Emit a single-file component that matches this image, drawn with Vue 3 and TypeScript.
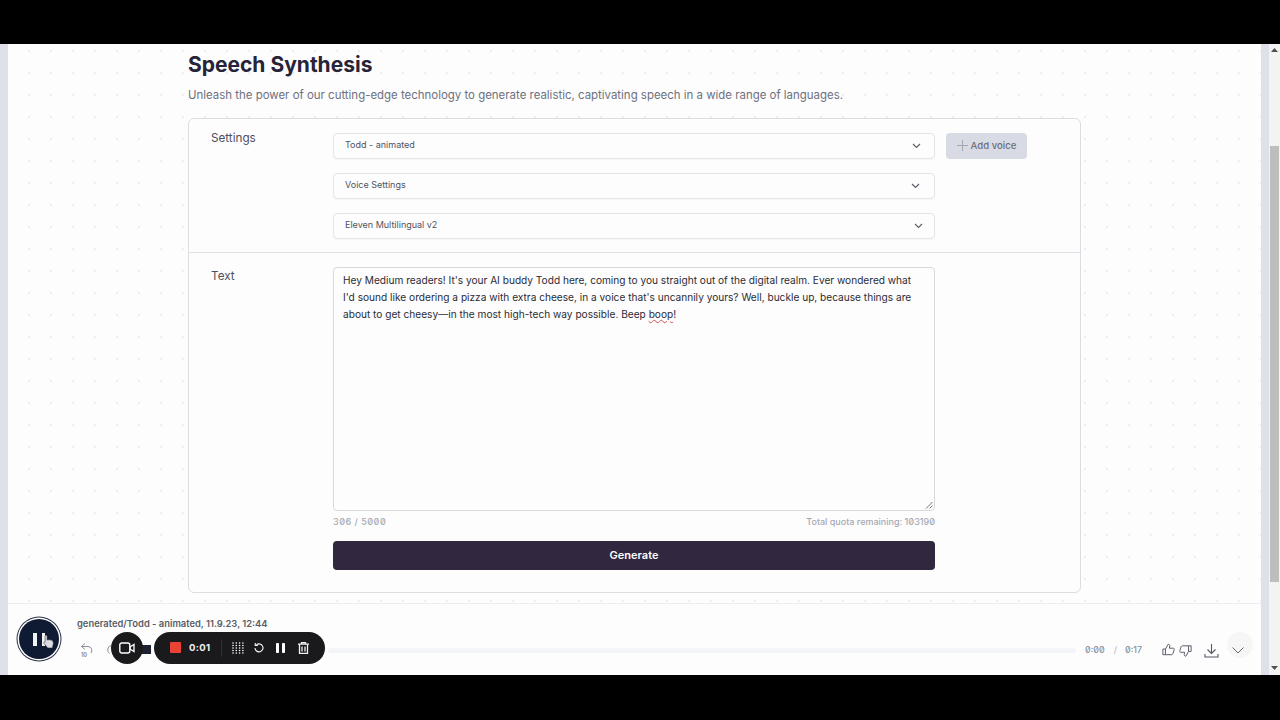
<script setup lang="ts">
const selects = ['Todd - animated', 'Voice Settings', 'Eleven Multilingual v2']
</script>

<template>
  <div class="screen">
    <div class="letterbox-top"></div>
    <div class="stage">
      <div class="side-strip"></div>
      <div class="page">
        <main class="content">
          <h1 class="title">Speech Synthesis</h1>
          <p class="lead">Unleash the power of our cutting-edge technology to generate realistic, captivating speech in a wide range of languages.</p>
          <section class="card">
            <div class="row settings">
              <div class="label">Settings</div>
              <div class="fields">
                <div v-for="s in selects" :key="s" class="select">
                  <span class="select-text">{{ s }}</span>
                  <svg class="chev" width="9" height="6" viewBox="0 0 9 6"><path d="M1 1 4.500 4.500 8 1" fill="none" stroke="#5b5d69" stroke-width="1.100"/></svg>
                </div>
              </div>
              <div class="add-voice">
                <svg width="11" height="11" viewBox="0 0 11 11"><path d="M5.500 0v11M0 5.500h11" stroke="#a3a6b3" stroke-width="1"/></svg>
                <span>Add voice</span>
              </div>
            </div>
            <div class="row text-row">
              <div class="label">Text</div>
              <div class="editor">
                <div class="textarea">
                  Hey Medium readers! It's your AI buddy Todd here, coming to you straight out of the digital realm. Ever wondered what I'd sound like ordering a pizza with extra cheese, in a voice that's uncannily yours? Well, buckle up, because things are about to get cheesy—in the most high-tech way possible. Beep <span class="misspelt">boop</span>!
                  <svg class="grip" width="8" height="8" viewBox="0 0 8 8"><path d="M7.500 1 1 7.500M7.500 4.500 4.500 7.500" stroke="#777" stroke-width="1"/></svg>
                </div>
                <div class="meta"><span class="count">306 / 5000</span><span>Total quota remaining: 103190</span></div>
                <button class="generate">Generate</button>
              </div>
            </div>
          </section>
        </main>
        <footer class="player">
          <div class="play">
            <span class="bar"></span><span class="bar"></span>
          </div>
          <div class="player-title">generated/Todd - animated, 11.9.23, 12:44</div>
          <div class="controls">
            <svg class="back" width="14" height="16" viewBox="0 0 14 16"><path d="M5 1.500 1.500 4.500 5 7.500M1.500 4.500H8a4 4 0 0 1 3 6.500" fill="none" stroke="#8c8f9a" stroke-width="1"/><text x="1" y="15" font-size="5.500" font-family="Inter" font-weight="700" fill="#8c8f9a">10</text></svg>
            <svg class="forward" width="14" height="16" viewBox="0 0 14 16"><path d="M5 2.500a4.500 4.500 0 0 0-1.500 8" fill="none" stroke="#8c8f9a" stroke-width="1"/></svg>
            <div class="track"></div>
            <div class="times"><span>0:00</span><span class="sep">/</span><span>0:17</span></div>
            <div class="actions">
              <svg class="thumb-up" width="13" height="13" viewBox="0 0 15 14"><path d="M1 6.500h3v6.500H1zM4 6.500 7 1c1.500 0 2 1 2 2L8.500 5.500H13c1 0 1.500 1 1 2l-1.500 4.500c-.3.800-1 1-1.500 1H4" fill="none" stroke="#555964" stroke-width="1.100"/></svg>
              <svg class="thumb-down" width="13" height="14" viewBox="0 0 15 14"><path d="M14 7.500h-3V1h3zM11 7.500 8 13c-1.500 0-2-1-2-2l.5-2.500H2c-1 0-1.500-1-1-2L2.500 2C2.800 1.200 3.500 1 4 1h7" fill="none" stroke="#555964" stroke-width="1.100"/></svg>
              <svg class="dl" width="15" height="15" viewBox="0 0 15 15"><path d="M7.500 1v9.500M3.500 6.500l4 4 4-4M1 11v3h13v-3" fill="none" stroke="#555964" stroke-width="1.100"/></svg>
              <div class="collapse"></div>
              <svg class="collapse-chev" width="12" height="7" viewBox="0 0 12 7"><path d="M.5.500 6 6l5.500-5.500" fill="none" stroke="#666a75" stroke-width="1"/></svg>
            </div>
          </div>
          <svg class="cursor" width="12" height="15" viewBox="0 0 14 17"><path d="M3.500 1.200c.8 0 1.300.6 1.300 1.400v4.200c.9-.3 5-.6 6.500 1 1 1.200.9 3.300.3 5.200L11 16H5.500L1 10.500c-.6-.8.500-1.800 1.300-1.200l.1.100V2.600c0-.8.300-1.400 1.100-1.400z" fill="#dcdce2" stroke="#2a2a3a" stroke-width=".6"/></svg>
        </footer>

        <div class="behind"></div>
        <div class="rec-cam">
          <svg width="16" height="12" viewBox="0 0 16 12"><rect x=".8" y="1" width="10" height="10" rx="2" fill="none" stroke="#fff" stroke-width="1.400"/><path d="M11 5l4-2.500v7L11 7z" fill="none" stroke="#fff" stroke-width="1.300"/></svg>
        </div>
        <div class="rec-pill">
          <span class="stop"></span>
          <span class="rec-time">0:01</span>
          <span class="rec-sep"></span>
          <svg class="i-grid" width="12" height="12" viewBox="0 0 12 12" fill="#fff"><circle v-for="p in 20" :key="p" :cx="1 + ((p - 1) % 4) * 3.300" :cy="1 + Math.floor((p - 1) / 4) * 2.500" r=".8"/></svg>
          <svg class="i-redo" width="10" height="11" viewBox="0 0 12 13"><path d="M3 3.200A4.800 4.800 0 1 1 1.200 7" fill="none" stroke="#fff" stroke-width="1.300"/><path d="M1.500 1v3h3" fill="none" stroke="#fff" stroke-width="1.300"/></svg>
          <svg class="i-pause" width="9" height="10" viewBox="0 0 9 10" fill="#fff"><rect x="0" y="0" width="3" height="10" rx=".8"/><rect x="6" y="0" width="3" height="10" rx=".8"/></svg>
          <svg class="i-trash" width="11" height="12" viewBox="0 0 11 12"><path d="M0 2.200h11M3.500 2V.7h4V2M1.500 2.500v9h8v-9M4 4.500v5M7 4.500v5" fill="none" stroke="#f0f0f0" stroke-width="1.300"/></svg>
        </div>
      </div>
      <div class="side-strip right"></div>
      <div class="scrollbar">
        <svg class="up" width="7" height="4" viewBox="0 0 7 4"><path d="M0 4 3.500 0 7 4z" fill="#505050"/></svg>
        <div class="thumb"></div>
        <svg class="dn" width="7" height="4" viewBox="0 0 7 4"><path d="M0 0 3.500 4 7 0z" fill="#505050"/></svg>
      </div>
    </div>
    <div class="letterbox-bottom"></div>
  </div>
</template>

<style>
html, body { margin: 0; background: #000; overflow: hidden; }
</style>

<style scoped>
.screen { width: 1280px; height: 720px; display: flex; flex-direction: column; font-family: Inter, "Noto Sans", sans-serif; background: #000; }
.letterbox-top { height: 44px; flex: none; background: #000; }
.letterbox-bottom { height: 45px; flex: none; background: #000; }
.stage { height: 631px; flex: none; display: flex; }
.side-strip { width: 8px; flex: none; background: #dfe1e8; }
.side-strip.right { background: #dfe1e8; }
.page { width: 1253px; flex: none; position: relative; display: flex; flex-direction: column; background-color: #fdfdfd; }
.content { flex: none; height: 559px; box-sizing: border-box; padding: 0 0 0 180px; background-color: #fdfdfd; background-image: radial-gradient(circle, #eeeef0 0.8px, transparent 1.1px); background-size: 22px 22px; background-position: 10px 18px; }
.title { margin: 8px 0 0; font-size: 21px; line-height: 26px; font-weight: 700; color: #27243a; letter-spacing: 0; }
.lead { margin: 8px 0 0; font-size: 11.450px; line-height: 18px; color: #6e7080; font-weight: 400; }
.card { width: 893px; box-sizing: border-box; height: 475px; margin-top: 14px; border: 1px solid #dcdde2; border-radius: 6px; background: #fdfdfd; display: flex; flex-direction: column; }
.row { display: flex; }
.settings { height: 134px; box-sizing: border-box; border-bottom: 1px solid #dfe0e6; padding-top: 14px; }
.label { width: 122px; flex: none; padding-left: 22px; font-size: 11.700px; line-height: 12px; color: #4d4f5e; }
.settings .label { margin-top: -1px; }
.fields { width: 602px; flex: none; display: flex; flex-direction: column; gap: 14px; }
.select { height: 26px; box-sizing: border-box; border: 1px solid #e5e6ea; border-radius: 4px; background: #fdfdfd; display: flex; align-items: center; justify-content: space-between; padding: 0 14px 0 11px; font-size: 9px; color: #50525f; box-shadow: 0 1px 1px rgba(40,40,60,.04); }
.select-text { margin-top: -3px; }
.chev { margin-top: -1px; }
.select:nth-child(1) .chev { margin-right: -1px; }
.select:nth-child(3) .chev { margin-right: -3px; }
.add-voice { margin-left: 11px; width: 81px; height: 26px; padding-bottom: 1px; box-sizing: border-box; border-radius: 4px; background: #d9dbe4; display: flex; align-items: center; justify-content: center; gap: 3px; font-size: 9.600px; font-weight: 500; color: #6b6e7c; }
.text-row { padding-top: 14px; flex: 1; }
.text-row .label { padding-top: 3px; }
.editor { width: 602px; flex: none; }
.textarea { position: relative; height: 244px; box-sizing: border-box; border: 1px solid #d8d9df; border-radius: 4px; background: #fdfdfd; padding: 4px 18px 4px 9px; font-size: 10.150px; line-height: 17px; color: #2c2c36; }
.grip { position: absolute; right: 1px; bottom: 1px; }
.misspelt { text-decoration: underline wavy #d9534f 1px; text-underline-offset: 1px; }
.meta { display: flex; justify-content: space-between; margin-top: 6px; font-size: 9px; line-height: 10px; color: #a6a8b2; font-weight: 500; font-feature-settings: "zero"; }
.count { letter-spacing: .5px; }
.generate { display: block; margin-top: 14px; width: 602px; height: 29px; padding: 0 0 2px; border: 0; border-radius: 4px; background: #312840; color: #fff; font-family: Inter, sans-serif; font-size: 11px; font-weight: 600; }
.player { position: relative; flex: 1; background: #fdfdfd; border-top: 1px solid #ecedf0; }
.play { position: absolute; left: 11px; top: 15px; width: 40px; height: 40px; border-radius: 50%; background: #0f1a33; box-shadow: 0 0 0 1.500px #fdfdfd, 0 0 0 2.500px #2a3145; display: flex; align-items: center; justify-content: center; gap: 5px; }
.bar { width: 3.500px; height: 13px; background: #f2f2f4; }
.player-title { position: absolute; left: 69px; top: 14px; font-size: 9.400px; line-height: 12px; font-weight: 600; color: #5a5c66; white-space: nowrap; }
.controls { position: absolute; left: 0; right: 0; top: 37px; height: 20px; }
.back { position: absolute; left: 72px; top: 1px; }
.forward { position: absolute; left: 98px; top: 2px; }
.track { position: absolute; left: 320px; width: 748px; top: 7px; height: 5px; border-radius: 3px; background: #f3f5f9; }
.times { position: absolute; left: 1077px; top: 3px; display: flex; font-size: 8.800px; line-height: 12px; color: #8b8e99; font-weight: 500; font-feature-settings: "zero"; }
.sep { margin: 0 8px 0 9px; color: #b8bac2; }
.actions { position: absolute; left: 1152px; top: 0; width: 102px; height: 20px; }
.thumb-up { position: absolute; left: 2px; top: 2px; }
.thumb-down { position: absolute; left: 19px; top: 3px; }
.dl { position: absolute; left: 44px; top: 2px; }
.collapse { position: absolute; left: 67px; top: -9px; width: 26px; height: 26px; border-radius: 50%; background: #f6f6f7; }
.collapse-chev { position: absolute; left: 72px; top: 6px; }
.cursor { position: absolute; left: 35px; top: 30px; }
.rec-cam { position: absolute; left: 103px; top: 588px; width: 32px; height: 32px; border-radius: 50%; background: #1a1a1c; display: flex; align-items: center; justify-content: center; }
.behind { position: absolute; left: 133px; top: 601px; width: 10px; height: 9px; background: #1d2030; }
.rec-pill { position: absolute; left: 146px; top: 588px; width: 171px; height: 32px; border-radius: 16px; background: #1a1a1c; }
.rec-pill > * { position: absolute; }
.stop { left: 16px; top: 10px; width: 11px; height: 11px; background: #ea4335; border-radius: 1px; }
.rec-time { left: 35px; top: 10px; font-size: 9.500px; line-height: 12px; font-weight: 700; color: #f2f2f2; letter-spacing: .3px; }
.rec-sep { left: 67px; top: 7px; width: 1px; height: 18px; background: #2f2f31; }
.i-grid { left: 78px; top: 10px; }
.i-redo { left: 100px; top: 10px; }
.i-pause { left: 122px; top: 11px; }
.i-trash { left: 144px; top: 10px; }
.scrollbar { width: 11px; flex: none; position: relative; background: #f3f3f4; }
.thumb { position: absolute; left: 1px; right: 1px; top: 102px; height: 436px; background: #bdbdbd; }
.up { position: absolute; left: 2px; top: 4px; }
.dn { position: absolute; left: 2px; bottom: 5px; }
</style>
